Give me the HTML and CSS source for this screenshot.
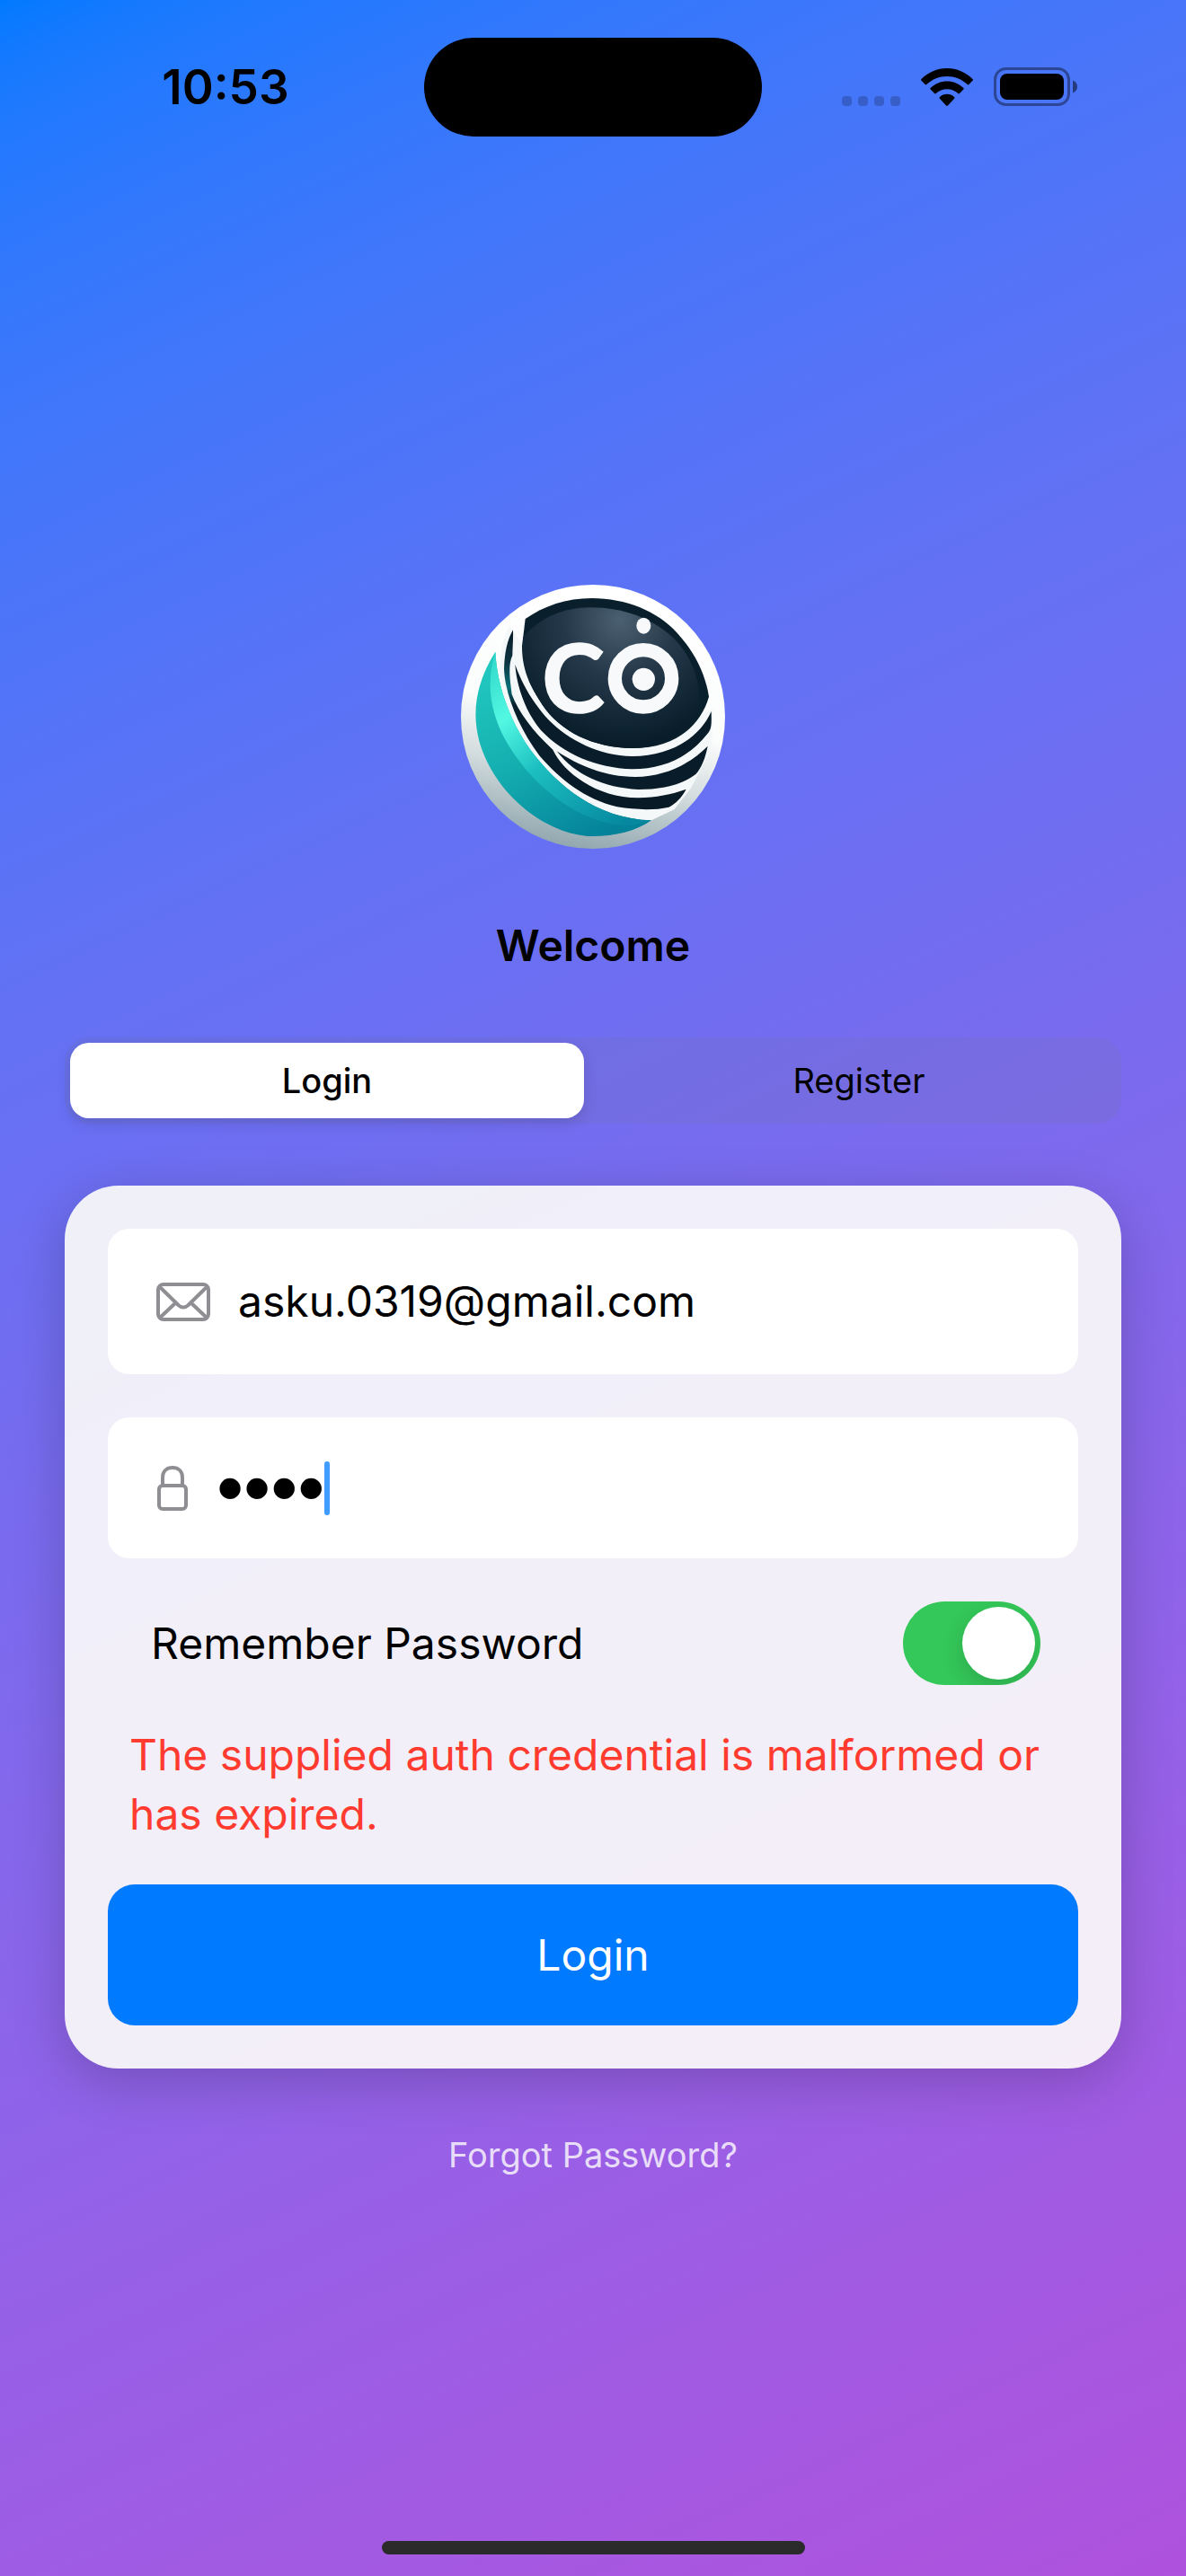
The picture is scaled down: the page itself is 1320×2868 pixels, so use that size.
FILE: index.html
```html
<!DOCTYPE html>
<html lang="en">
<head>
  <meta charset="utf-8">
  <meta name="viewport" content="width=device-width, initial-scale=1">
  <title>Welcome</title>
  <link rel="stylesheet" href="styles.css">
</head>
<body>
  <header class="status">
    <time class="status-time">10:53</time>
    <div class="island"></div>
    <div class="status-icons">
      <svg class="signal" viewBox="0 0 65 11" aria-hidden="true">
        <rect x="0" width="11" height="11" rx="4"/><rect x="18" width="11" height="11" rx="4"/><rect x="36" width="11" height="11" rx="4"/><rect x="54" width="11" height="11" rx="4"/>
      </svg>
      <svg class="wifi" viewBox="0 0 58 42" aria-hidden="true">
        <path d="M29 0C40 0 50 4.500 57.500 12C58.200 12.700 58 13.300 57.500 13.800L53.300 18C52.700 18.600 52.200 18.500 51.700 18C45.500 12.200 37.500 9 29 9S12.500 12.200 6.300 18C5.800 18.500 5.300 18.600 4.700 18L.5 13.800C0 13.300-.2 12.700.5 12C8 4.500 18 0 29 0Z"/>
        <path d="M29 14.500C36 14.500 42.300 17.200 47.200 21.800C47.900 22.500 47.900 23 47.300 23.600L43 28C42.400 28.600 41.900 28.500 41.300 28C38 25 33.700 23.300 29 23.300S20 25 16.700 28C16.100 28.500 15.600 28.600 15 28L10.700 23.600C10.100 23 10.100 22.500 10.800 21.800C15.700 17.200 22 14.500 29 14.500Z"/>
        <path d="M29 28.800C32.100 28.800 34.900 30 37 31.900C37.700 32.500 37.700 33.100 37.100 33.700L29.900 41.500C29.300 42 28.700 42 28.100 41.500L20.900 33.700C20.300 33.100 20.300 32.500 21 31.900C23.100 30 25.900 28.800 29 28.800Z"/>
      </svg>
      <svg class="battery" viewBox="0 0 94 43" aria-hidden="true">
        <rect x="1.500" y="1.500" width="82" height="40" rx="12" fill="none" stroke="#000" stroke-opacity=".4" stroke-width="3"/>
        <rect x="7" y="7" width="71" height="29" rx="8"/>
        <path d="M88 14.500C91.500 16 93 18.500 93 21.500S91.500 27 88 28.500Z" fill-opacity=".5"/>
      </svg>
    </div>
  </header>

  <main class="main">
    <svg class="logo" viewBox="68 64 882 882" role="img" aria-label="CO">
      <defs>
        <linearGradient id="rim" x1=".6" y1="0" x2=".4" y2="1">
          <stop offset="0" stop-color="#fff"/><stop offset=".5" stop-color="#fbfcfc"/><stop offset=".72" stop-color="#d3dcde"/><stop offset="1" stop-color="#8fa5ad"/>
        </linearGradient>
        <radialGradient id="dome" cx="600" cy="180" r="420" gradientUnits="userSpaceOnUse">
          <stop offset="0" stop-color="#4b6070"/><stop offset=".45" stop-color="#24384a"/><stop offset="1" stop-color="#081d29"/>
        </radialGradient>
        <linearGradient id="teal" x1=".2" y1="0" x2=".7" y2="1">
          <stop offset="0" stop-color="#22c9bf"/><stop offset=".5" stop-color="#14aeb0"/><stop offset="1" stop-color="#04829a"/>
        </linearGradient>
        <linearGradient id="glow" x1="0" y1="0" x2=".8" y2="1">
          <stop offset="0" stop-color="#2fd6c8"/><stop offset=".28" stop-color="#52f8e2"/><stop offset=".55" stop-color="#1cbfc0"/><stop offset="1" stop-color="#0689a0"/>
        </linearGradient>
        <linearGradient id="strip" x1="0" y1="215" x2="0" y2="815" gradientUnits="userSpaceOnUse">
          <stop offset="0" stop-color="#081c28"/><stop offset=".18" stop-color="#0d3440"/><stop offset=".32" stop-color="#0b6f78"/><stop offset=".42" stop-color="#08202c"/><stop offset="1" stop-color="#071a26"/>
        </linearGradient>
      </defs>
      <circle cx="509" cy="505" r="441" fill="url(#rim)"/>
      <path fill="#f5f8f9" d="M230 200C180 300 190 430 270 575C370 725 520 850 704 851L780 815L835 745L905 610L910 480L700 560L400 460Z"/>
      <path fill="#0a1f2c" d="M283 178C345 135 420 109 505 109C620 110 720 150 790 225C850 290 885 365 896 438C870 530 790 610 640 610C510 608 400 555 340 465C300 405 272 350 272 270Z"/>
      <path fill="url(#dome)" d="M275 240C330 175 410 140 500 140C610 140 700 175 770 235C840 300 870 385 864 485C815 570 740 609 640 610C510 608 400 555 340 465C300 405 270 350 275 240Z"/>
      <path fill="#081d29" d="M249 330C275 405 315 465 360 515C430 585 530 636 640 637C770 636 865 575 904 487C905 530 905 545 893 560C835 635 750 680 640 680C520 676 410 630 335 550C285 490 255 410 249 330Z"/>
      <path fill="#081d29" d="M388 620C460 668 550 706 650 706C750 704 830 665 892 603C885 640 872 675 852 697C805 733 740 748 660 748C545 742 450 700 388 620Z"/>
      <path fill="url(#strip)" d="M242 215C243 250 240 280 240 300C226 330 230 370 238 430C260 490 310 555 375 615C410 690 520 775 660 776C720 774 770 765 820 747C805 775 785 795 762 807C715 818 650 816 590 806C480 780 400 715 330 635C260 540 215 430 212 345C214 290 222 250 242 215Z"/>
      <path fill="url(#teal)" d="M183 288C188 390 225 510 300 615C390 735 520 845 704 851C650 890 570 907 490 904C340 890 180 760 130 590C100 480 125 380 183 288Z"/>
      <path fill="url(#glow)" d="M183 288C188 390 225 510 300 615C390 735 520 845 704 851C650 872 600 872 550 858C420 825 290 715 215 580C170 495 148 400 183 288Z"/>
      <g fill="#f7f9fa">
        <text class="logo-letter" x="443" y="490" text-anchor="middle">C</text>
        <circle cx="677" cy="377" r="95" fill="none" stroke="#f7f9fa" stroke-width="46"/>
        <circle cx="678" cy="380" r="38"/>
        <ellipse cx="678" cy="201" rx="24" ry="27"/>
      </g>
    </svg>

    <h1 class="title">Welcome</h1>

    <div class="segments" role="tablist">
      <button class="segment segment-active" type="button" role="tab" aria-selected="true">Login</button>
      <button class="segment" type="button" role="tab" aria-selected="false">Register</button>
    </div>

    <form class="card">
      <label class="field field-email">
        <svg class="icon-mail" viewBox="0 0 60 43" aria-hidden="true">
          <rect x="2" y="2" width="56" height="39" rx="6"/>
          <path d="M4 5L25 25.500Q30 29.500 35 25.500L56 5M4 39L22 22M56 39L38 22"/>
        </svg>
        <input class="input" type="email" aria-label="Email" value="asku.0319@gmail.com">
      </label>
      <label class="field">
        <svg class="icon-lock" viewBox="0 0 34 50" aria-hidden="true">
          <rect x="2" y="22" width="30" height="26" rx="4"/>
          <path d="M6 22V13C6 6 10.500 2 17 2S28 6 28 13V22"/>
        </svg>
        <span class="secret">
          <input class="input input-password" type="password" aria-label="Password" value="pass">
          <span class="caret"></span>
        </span>
      </label>
      <div class="remember">
        <label for="remember">Remember Password</label>
        <input class="toggle" type="checkbox" role="switch" id="remember" checked>
      </div>
      <p class="error" role="alert">The supplied auth credential is malformed or has expired.</p>
      <button class="submit" type="submit">Login</button>
    </form>

    <a class="forgot" href="#">Forgot Password?</a>
  </main>

  <footer class="home"><div class="home-bar"></div></footer>
</body>
</html>
```
FILE: styles.css
```css
* { box-sizing: border-box; }

body {
  margin: 0;
  min-height: 100vh;
  display: flex;
  flex-direction: column;
  font-family: Inter, "Liberation Sans", sans-serif;
  font-size: 48px;
  line-height: 60px;
  color: #000;
  background: linear-gradient(155deg in oklab, #007aff, #af52de);
}

button, input { font: inherit; color: inherit; border: 0; margin: 0; padding: 0; }

.status {
  display: grid;
  grid-template-columns: 1fr 376px 1fr;
  align-items: center;
  padding-top: 42px;
}
.status-time { padding-left: 30px; text-align: center; font-size: 53px; font-weight: 600; }
.island { height: 110px; border-radius: 55px; background: #000; }
.status-icons { display: flex; justify-content: center; align-items: flex-end; gap: 23px; padding: 0 32px 2px 0; }
.signal { width: 65px; height: 11px; fill-opacity: .2; }
.wifi { width: 58px; height: 42px; }
.battery { width: 94px; height: 43px; }

.main {
  flex: 1;
  display: flex;
  flex-direction: column;
  align-items: center;
  padding: 499px 72px 0;
}

.logo { width: 294px; height: 294px; }
.logo-letter { font-family: Lato, sans-serif; font-weight: 700; font-size: 315px; stroke: #f7f9fa; stroke-width: 5; }

.title { margin: 78px 0 72px; font-size: 48px; font-weight: 600; line-height: 60px; }

.segments {
  display: grid;
  grid-template-columns: 1fr 1fr;
  gap: 20px;
  width: 100%;
  padding: 6px;
  border-radius: 27px;
  background: rgba(118, 118, 128, .12);
}
.segment { height: 84px; border-radius: 21px; background: none; font-size: 38px; }
.segment-active { background: #fff; font-weight: 500; box-shadow: 0 6px 16px rgba(0, 0, 0, .12); }

.card {
  display: flex;
  flex-direction: column;
  gap: 48px;
  width: 100%;
  margin-top: 69px;
  padding: 48px;
  border-radius: 60px;
  background: rgba(254, 254, 250, .9);
  box-shadow: 0 15px 60px rgba(0, 0, 0, .2);
}

.field {
  display: flex;
  align-items: center;
  height: 157px;
  padding: 0 54px;
  border-radius: 24px;
  background: #fff;
}
.field-email { height: 162px; }
.field svg { flex: none; fill: none; stroke: #8e8e93; stroke-width: 4; stroke-linejoin: round; }
.icon-mail { width: 60px; height: 43px; margin-right: 31px; }
.icon-lock { width: 36px; height: 50px; margin-right: 31px; }
.input { flex: 1; min-width: 0; background: none; outline: none; }
.input-password { flex: none; field-sizing: content; font-family: "Liberation Sans", sans-serif; font-size: 86px; }
.secret { display: flex; align-items: center; }
.caret { width: 6px; height: 60px; border-radius: 3px; background: #409cff; }

.remember { display: flex; justify-content: space-between; align-items: center; padding: 0 42px 0 48px; }
.toggle {
  appearance: none;
  display: flex;
  width: 153px;
  height: 93px;
  padding: 6px;
  overflow: hidden;
  border-radius: 47px;
  background: #34c759;
}
.toggle::before {
  content: "";
  width: 81px;
  height: 81px;
  margin-left: auto;
  border-radius: 50%;
  background: #fff;
  box-shadow: 0 9px 24px rgba(0, 0, 0, .15);
}

.error { margin: -3px 0; padding: 0 24px; line-height: 66px; color: #ff3b30; }

.submit { height: 157px; border-radius: 30px; background: #007aff; color: #fff; }

.forgot { margin-top: 72px; font-size: 38px; line-height: 48px; color: rgba(255, 255, 255, .8); text-decoration: none; }

.home { display: flex; justify-content: center; padding-bottom: 24px; }
.home-bar { width: 471px; height: 15px; border-radius: 8px; background: #2b2b2b; }
```
